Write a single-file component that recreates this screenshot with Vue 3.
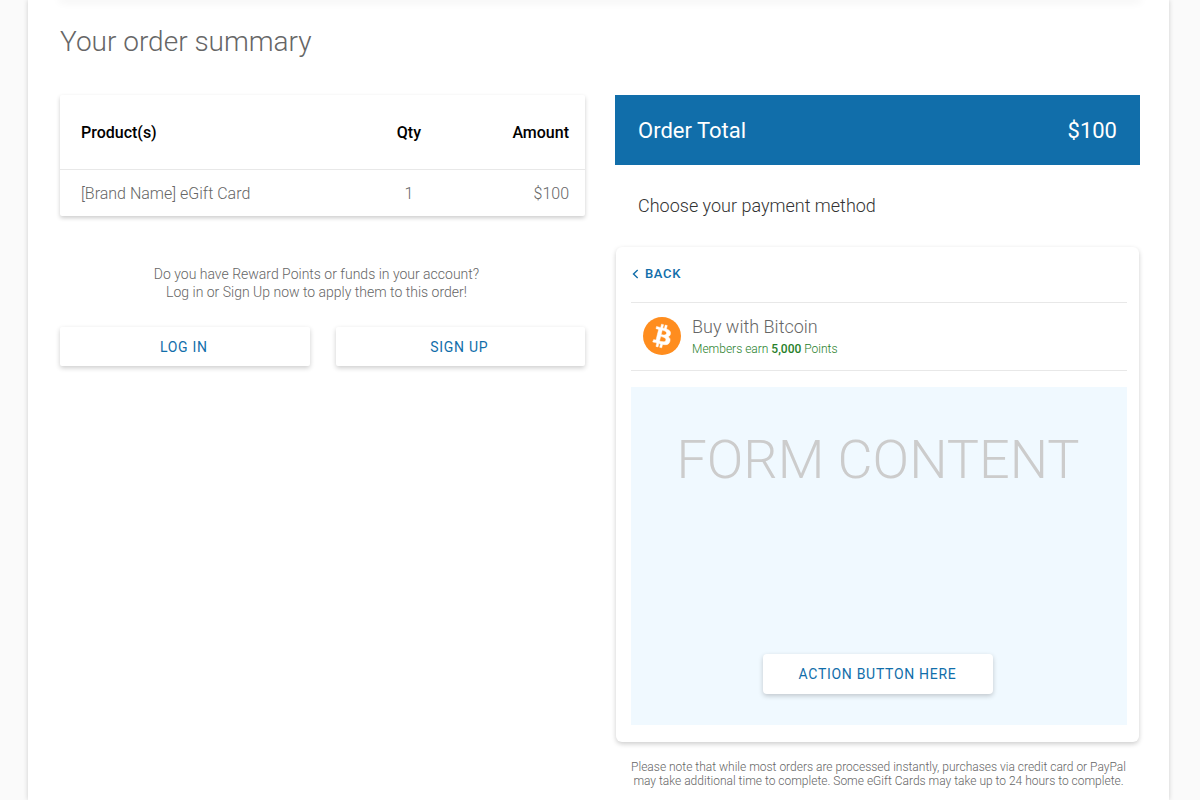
<script setup>
const items = [{ name: '[Brand Name] eGift Card', qty: 1, amount: '$100' }]
</script>

<template>
  <main class="sheet">
    <div class="previous" aria-hidden="true"></div>
    <h1 class="title">Your order summary</h1>
    <div class="columns">
      <section class="summary">
        <table class="products">
          <thead>
            <tr>
              <th scope="col" class="name">Product(s)</th>
              <th scope="col" class="qty">Qty</th>
              <th scope="col" class="amount">Amount</th>
            </tr>
          </thead>
          <tbody>
            <tr v-for="item in items" :key="item.name">
              <td class="name">{{ item.name }}</td>
              <td class="qty">{{ item.qty }}</td>
              <td class="amount">{{ item.amount }}</td>
            </tr>
          </tbody>
        </table>
        <p class="rewards">
          Do you have Reward Points or funds in your account?<br />
          Log in or Sign Up now to apply them to this order!
        </p>
        <div class="account">
          <button type="button" class="btn">LOG IN</button>
          <button type="button" class="btn">SIGN UP</button>
        </div>
      </section>

      <section class="payment">
        <div class="total">
          <span>Order Total</span>
          <span>$100</span>
        </div>
        <h2 class="choose">Choose your payment method</h2>
        <div class="card">
          <button type="button" class="back">
            <svg width="7" height="10" viewBox="0 0 7 10" aria-hidden="true">
              <path d="M5.7 1 L1.5 5 L5.7 9" fill="none" stroke="currentColor" stroke-width="1.4" />
            </svg>
            BACK
          </button>
          <div class="method">
            <svg class="coin" viewBox="0 0 32 32" aria-hidden="true">
              <circle cx="16" cy="16" r="16" fill="#ff8d1e" />
              <path
                fill="#fff"
                stroke="#fff"
                stroke-width="0.4"
                d="M23.19 14.02c.314-2.096-1.283-3.223-3.465-3.975l.708-2.84-1.728-.43-.69 2.765c-.454-.114-.92-.22-1.385-.326l.695-2.783L15.596 6l-.708 2.839c-.376-.086-.746-.17-1.104-.26l.002-.009-2.384-.595-.46 1.846s1.283.294 1.256.312c.7.175.826.638.805 1.006l-.806 3.235c.048.012.11.03.18.057l-.183-.045-1.13 4.532c-.086.212-.303.531-.793.41.018.025-1.256-.313-1.256-.313l-.858 1.978 2.25.561c.418.105.828.215 1.231.318l-.715 2.872 1.727.43.708-2.84c.472.127.93.245 1.378.357l-.706 2.828 1.728.43.715-2.866c2.948.558 5.164.333 6.097-2.333.752-2.146-.037-3.385-1.588-4.192 1.13-.26 1.98-1.003 2.207-2.538zm-3.95 5.538c-.533 2.147-4.148.986-5.32.695l.95-3.805c1.172.293 4.929.872 4.37 3.11zm.535-5.569c-.487 1.953-3.495.96-4.47.717l.86-3.45c.975.243 4.118.696 3.61 2.733z"
              />
            </svg>
            <div>
              <h3 class="method-name">Buy with Bitcoin</h3>
              <p class="points">Members earn <b>5,000</b> Points</p>
            </div>
          </div>
          <div class="form">
            <p class="placeholder">FORM CONTENT</p>
            <button type="button" class="btn action">ACTION BUTTON HERE</button>
          </div>
        </div>
        <p class="note">
          Please note that while most orders are processed instantly, purchases via credit card or PayPal
          may take additional time to complete. Some eGift Cards may take up to 24 hours to complete.
        </p>
      </section>
    </div>
  </main>
</template>

<style>
body {
  background: #fafafa;
}
</style>

<style scoped>
.sheet {
  box-sizing: border-box;
  min-height: 100vh;
  margin: 0 31px 0 28px;
  padding: 0 29px 4px 32px;
  background: #fff;
  box-shadow: 0 0 5px rgba(0, 0, 0, 0.18);
  color: #666;
  font-family: Roboto, "Liberation Sans", sans-serif;
  font-weight: 300;
}
h1, h2, h3, p {
  margin: 0;
  font-weight: 300;
}
button {
  border: 0;
  background: #fff;
  color: #116eaa;
  font: 400 14px/20px Roboto, "Liberation Sans", sans-serif;
  letter-spacing: 0.05em;
  cursor: pointer;
}
.previous {
  height: 0;
  box-shadow: 0 0 8px 1px rgba(0, 0, 0, 0.14);
}
.title {
  padding: 22px 0 33px;
  font-size: 28px;
  line-height: 40px;
}
.columns {
  display: grid;
  grid-template-columns: 1fr 1fr;
  gap: 30px;
}
.products {
  width: 100%;
  border-collapse: collapse;
  table-layout: fixed;
  border-radius: 2px;
  background: #fff;
  box-shadow: 0 2px 4px rgba(0, 0, 0, 0.2);
  font-size: 16px;
  line-height: 20px;
}
.products th {
  padding: 28px 0 26px;
  border-bottom: 1px solid #e8e8e8;
  color: #000;
  font-weight: 500;
}
.products td {
  padding: 14px 0 12px;
}
.products .name {
  padding-left: 21px;
  text-align: left;
}
.products .qty {
  width: 17%;
  text-align: center;
}
.products .amount {
  width: 22%;
  padding-right: 16px;
  text-align: right;
}
.rewards {
  margin-top: 49px;
  padding-right: 12px;
  font-size: 14px;
  line-height: 18px;
  text-align: center;
}
.account {
  display: grid;
  grid-template-columns: 1fr 1fr;
  gap: 26px;
  margin-top: 26px;
}
.btn {
  padding: 10px 12px 9px 10px;
  border-radius: 2px;
  box-shadow: 0 2px 5px rgba(0, 0, 0, 0.2);
}
.total {
  display: flex;
  justify-content: space-between;
  padding: 21px 23px 19px;
  background: #116eaa;
  color: #fff;
  font-size: 22px;
  font-weight: 400;
  line-height: 30px;
}
.choose {
  padding: 28px 23px;
  color: #333;
  font-size: 18px;
  line-height: 26px;
}
.card {
  padding: 17px 12px 17px 15px;
  margin: 0 1px;
  border-radius: 6px;
  background: #fff;
  box-shadow: 0 2px 5px rgba(0, 0, 0, 0.2);
}
.back {
  display: flex;
  align-items: center;
  gap: 6px;
  padding: 0 0 0 1px;
  font-size: 13px;
  font-weight: 500;
}
.method {
  display: flex;
  align-items: center;
  gap: 11px;
  margin-top: 18px;
  padding: 10px 12px 11px;
  border-top: 1px solid #e8e8e8;
  border-bottom: 1px solid #e8e8e8;
}
.coin {
  width: 38px;
  height: 38px;
}
.method-name {
  padding-top: 2px;
  font-size: 18px;
  line-height: 24px;
}
.points {
  color: #27802a;
  font-size: 12px;
  line-height: 20px;
}
.points b {
  font-weight: 500;
}
.form {
  display: flex;
  flex-direction: column;
  align-items: center;
  justify-content: space-between;
  min-height: 268px;
  margin-top: 16px;
  padding: 39px 2px 31px 0;
  background: #f0f9ff;
}
.placeholder {
  color: #ccc;
  font-size: 54px;
  font-weight: 300;
  line-height: 68px;
}
.action {
  padding: 10px 37px 10px 36px;
  border-radius: 4px;
}
.note {
  margin-top: 18px;
  padding: 0 12px 0 14px;
  font-size: 12px;
  line-height: 14px;
  text-align: center;
}
</style>
